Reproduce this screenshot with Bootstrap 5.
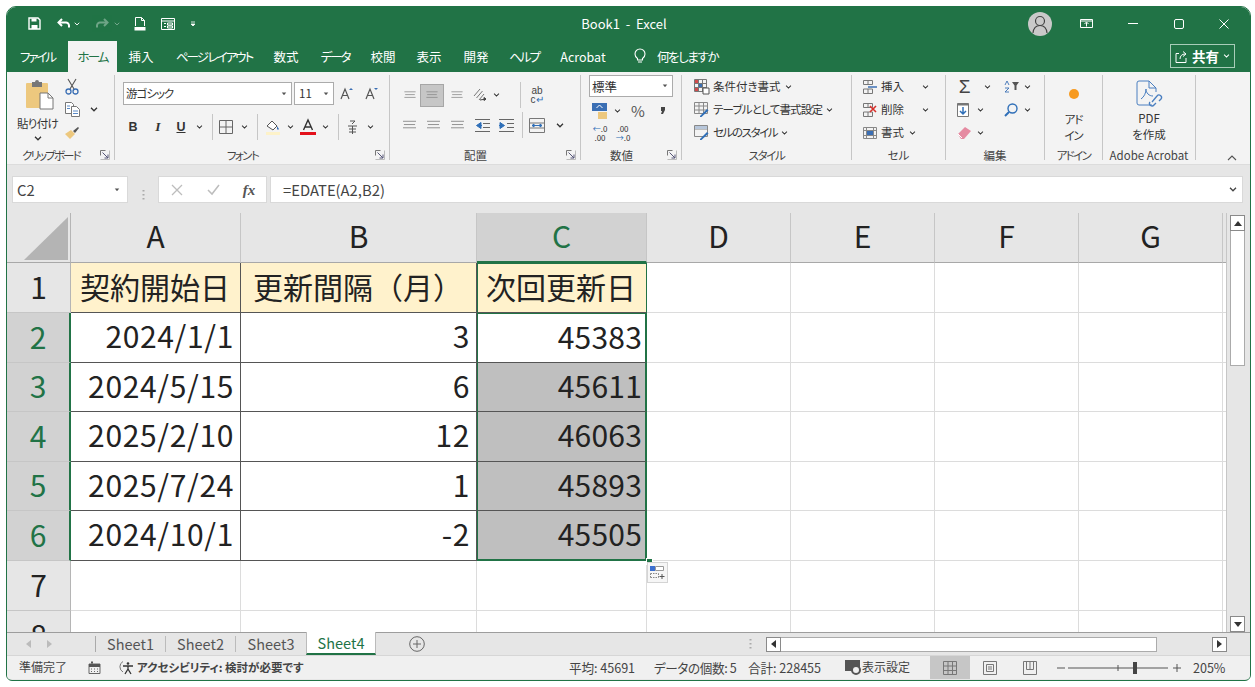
<!DOCTYPE html>
<html lang="ja"><head><meta charset="utf-8"><title>Book1 - Excel</title>
<link href="https://cdn.jsdelivr.net/npm/bootstrap@5.3.0/dist/css/bootstrap.min.css" rel="stylesheet">
<style>
html,body{margin:0;height:687px;overflow:hidden;background:#fff}
body{font-family:"Noto Sans CJK JP","Noto Sans",sans-serif;font-feature-settings:"palt";color:#333;font-size:12px;line-height:1.2}
svg{display:block;flex:none;overflow:visible}
.xwin{margin:6px 4px 0 6px;height:675px;border:1px solid #217346;border-radius:10px 10px 6px 6px;overflow:hidden;background:#e6e6e6;display:flex;flex-direction:column}
.xtitle{height:33px;background:#217346;color:#fff;display:grid;align-items:center;font-size:13px;flex:none;grid-template-columns:21px 13px 16px 13px 4px 8px 13px 13px 6px 8px 12px 12px 15px 14px 15px 8px 1fr 24px 28px 13px 35px 10px 36px 9px 36px 9px 22px}
.xname{text-align:center;padding-left:22px;font-size:13px}
.xtabs{height:32px;background:#217346;color:#fff;flex:none;display:flex;align-items:flex-end;font-size:12.5px}
.xtab{height:32px;display:flex;align-items:center;justify-content:center;flex:none}
.xtab.on{background:#f3f3f3;color:#217346;height:31px}
.xk{letter-spacing:-2px}
.t1{width:61px}.t2{width:49px}.t3{width:48px}.t4{width:98px}.t5{width:46px}.t6{width:52px}.t7{width:44px}.t8{width:48px}.t9{width:46px}.t10{width:50px}.t11{width:68px}.t12{width:30px;margin-left:8px}.t13{width:65px}
.xshare{margin-left:auto;margin-right:15px;margin-bottom:4px;width:65px;height:24px;border:1px solid #a9cdb9;display:flex;align-items:center;justify-content:center;gap:4px;font-weight:700;font-size:13.5px}
.xrib{height:93px;background:#f3f3f3;display:flex;flex:none;padding-top:3px;border-bottom:1px solid #dcdcdc}
.xg{height:85px;border-right:1px solid #c6c6c6;display:flex;flex-direction:column;flex:none}
.xg1{width:108px}.xg2{width:275px}.xg3{width:191px}.xg4{width:101px}.xg5{width:170px}.xg6{width:94px}.xg7{width:99px}.xg8{width:58px}.xg9{width:93px}
.xb{height:72px;flex:none}
.xl{height:13px;line-height:16px;display:grid;grid-template-columns:1fr 14px;text-align:center;font-size:11.5px;color:#444;align-items:center}
.xl>span{padding-right:5px;white-space:nowrap}
.xl.nol{grid-template-columns:1fr}
.xl.nol>span{padding-right:0}
.k1{letter-spacing:-1.9px}.k2{letter-spacing:-1.6px}.k3{letter-spacing:-.8px}.k4{letter-spacing:-1.4px}.k5{letter-spacing:-.7px}.k6{letter-spacing:-1px}
.xr{display:grid;align-items:center;justify-items:center;height:23px}
.xt{font-size:11.5px;color:#333;white-space:nowrap}
.xsel{background:#fff;border:1px solid #ababab;height:23px;width:100%;display:flex;align-items:center;justify-content:space-between;padding:0 4px 0 2px;font-size:11.5px;color:#333}
.xsel.pl{padding-left:4px}
.xsel.big{font-size:12.5px}
.xv{width:1px;height:26px;background:#c6c6c6}
.xon{width:24px;height:23px;background:#c6c6c6;border:1px solid #a6a6a6;display:flex;align-items:center;justify-content:center}
.pt7{padding-top:7px}
.rf1{grid-template-columns:169px 2px 40px 25px 24px;margin-left:8px;justify-content:start}
.rf2{grid-template-columns:20px 30px 16px 20px 6px 22px 14px 12px 20px 14px 21px 15px 10px 18px 18px;margin:9px 0 0 8px;justify-content:start}
.ra1{grid-template-columns:21px 24px 25px 22px 10px 19px 1px 32px;margin-left:9px;justify-content:start}
.ra2{grid-template-columns:21px 26px 23px 26px 22px 5px 1px 28px 18px;margin:7px 0 0 9px;justify-content:start}
.rn0{margin:0 0 0 8px;width:84px;height:22px}
.rn1{grid-template-columns:20px 16px 26px 24px;margin:2px 0 0 8px;justify-content:start}
.rn2{grid-template-columns:22px 24px;margin:-1px 0 0 8px;justify-content:start;height:24px}
.rs{display:flex;align-items:center;gap:4px;height:23px;padding-left:12px}
.rc1{grid-template-columns:18px 30px 28px;margin-left:11px;justify-content:start;justify-items:start}
.rc2{grid-template-columns:18px 28px 10px;margin-left:11px;justify-content:start;justify-items:start}
.rc1>svg:last-child{justify-self:center}
.re1{grid-template-columns:17px 28px 21px 10px;margin-left:10px;justify-content:start}
.re2{grid-template-columns:14px 20px 10px 22px 10px;margin-left:10px;justify-content:start}
.re3{grid-template-columns:17px 14px;margin-left:10px;justify-content:start}
.xcl1{display:flex}
.xcl1a{width:53px;padding:5px 0 0 8px;display:flex;flex-direction:column;align-items:center}
.xpaste{margin-left:5px}
.xpt{margin-top:7px}.xpc{margin-top:5px}
.xcl1b{display:grid;grid-template-columns:4px 16px 10px 8px;grid-template-rows:23px 23px 23px;align-items:center;justify-items:center}
.xbig{display:flex;flex-direction:column;align-items:center;line-height:16px;font-size:11.5px;color:#333;padding-top:5px}
.xdot{margin:8px 0 11px}
.xpdf{margin-bottom:3px}
.xcol{flex:1;display:flex;align-items:flex-end;justify-content:flex-end;padding:0 13px 3px 0}
.xfB{font-family:"Liberation Sans",sans-serif;font-size:12.5px;font-weight:700}
.xfI{font-family:"Liberation Serif",serif;font-size:13.5px;font-weight:700;font-style:italic}
.xfU{text-decoration:underline}
.xab{font-size:10px;line-height:9px;color:#444;font-family:"Liberation Sans",sans-serif;text-align:center}
.xbl{color:#2f6fb8}
.xdec{font-size:8px;line-height:9px;text-align:center}
.xpct{font-size:15px;color:#555}
.xsig{font-size:19px;line-height:1;color:#444;font-family:"Liberation Sans",sans-serif}
.xfb{height:48px;background:#e6e6e6;flex:none;display:flex;align-items:flex-start;padding:11px 7px 0 5px;font-size:14.8px}
.xbox{height:27px;background:#fff;border:1px solid #d9d9d9;display:flex;align-items:center;flex:none}
.xnm{width:116px;padding:0 7px 0 4px;justify-content:space-between;color:#444}
.xdots{width:30px;display:flex;justify-content:center;align-self:center}
.xbtns{width:109px;display:grid;grid-template-columns:36px 36px 36px;justify-items:center}
.xfx{font-family:"Liberation Serif",serif;font-size:15px;font-weight:700;font-style:italic;color:#555}
.xfm{flex:1;margin-left:3px;padding:0 5px 0 12px;justify-content:space-between;color:#444}
.xarea{height:419px;display:flex;flex:none;background:#e6e6e6;overflow:hidden;position:relative}
.xsheet{width:1219px;height:419px;overflow:hidden;display:grid;grid-template-columns:64px 170px 236px 170px 144px 144px 144px 144px 3px;grid-template-rows:50px 50px 50px 49px 50px 49px 50px 50px 50px;font-size:30px;color:#222;background:#fff;flex:none;font-feature-settings:normal}
.xsheet>div{display:flex;align-items:center;line-height:1;overflow:hidden;white-space:nowrap}
.xch{justify-content:center;background:#e6e6e6;border-right:1px solid #c6c6c6;border-bottom:1px solid #a8a8a8;padding-bottom:5px}
.xch.sl{background:#d2d2d2;color:#217346;border-bottom:2px solid #217346}
.xco{background:#e6e6e6;border-right:1px solid #b5b5b5;border-bottom:1px solid #a8a8a8;padding:4px 2px 2px 17px;align-items:stretch!important}
.xrh{justify-content:center;background:#e6e6e6;border-right:1px solid #b5b5b5;border-bottom:1px solid #c6c6c6;padding-bottom:4px}
.xrh.sl{background:#d2d2d2;color:#217346;border-right:2px solid #217346}
.xce{border-right:1px solid #dcdcdc;border-bottom:1px solid #dcdcdc;background:#fff}
.xfl{background:#fff;border-bottom:1px solid #dcdcdc}
.xfh{background:#e6e6e6;border-bottom:1px solid #a8a8a8}
.xhd{background:#fff2cc;border-right:1px solid #555;border-bottom:1px solid #555;padding-left:9px;padding-bottom:4px}
.xhd.hb{padding-left:12px}
.xda{background:#fff;border-right:1px solid #555;border-bottom:1px solid #555;justify-content:flex-end;padding-right:6px;padding-bottom:5px;letter-spacing:.65px}
.xc1{border-left:1px solid #217346;border-top:1px solid #217346;border-right:1px solid #217346;padding-left:8px}
.xsheet>.xcs{border-left:1px solid #217346;border-right:2px solid #217346;padding-right:3px;letter-spacing:.2px}
.xcs.gr{background:#bfbfbf}
.xcs.la{border-bottom:2px solid #217346}
.xcs.fi{border-top:1px solid #217346}
.xsb{flex:1;padding:2px 5px 0 3px;display:flex;flex-direction:column;border-left:1px solid #c6c6c6}
.xsbb{height:16px;background:#fff;border:1px solid #8a8a8a;display:flex;align-items:center;justify-content:center;flex:none}
.xsbt{height:135px;background:#fff;border:1px solid #ababab;border-top:0;flex:none}
.xsbs{flex:1}
.xhandle{position:absolute;left:639px;top:345px;width:5px;height:5px;background:#217346;border:1px solid #fff;box-sizing:content-box}
.xqa{position:absolute;left:640px;top:349px;width:21px;height:21px;background:#f6f6f6;border:1px solid #d4d4d4;display:flex;align-items:center;justify-content:center}
.xbar{height:23px;flex:none;display:flex;align-items:stretch;border-top:1px solid #9d9d9d;background:#e6e6e6;font-size:14.5px;color:#555}
.xnav{width:89px;display:flex;align-items:center;padding-left:19px;gap:16px;border-right:1px solid #aaa;margin:3px 0}
.xst{width:70px;display:flex;align-items:center;justify-content:center;flex:none}
.xst.br{border-right:1px solid #bbb;margin:3px 0}
.xst.on{background:#fff;color:#217346;border-left:1px solid #bbb;border-right:1px solid #bbb;border-bottom:2px solid #217346;margin-top:-1px}
.xplus{width:82px;display:flex;align-items:center;justify-content:center}
.xhs{margin-left:auto;display:flex;align-items:center;padding-right:23px}
.xhsb{width:15px;height:15px;background:#fff;border:1px solid #8a8a8a;display:flex;align-items:center;justify-content:center;flex:none}
.xhst{width:376px;height:15px;background:#fff;border:1px solid #ababab;border-left:0}
.xhse{width:55px}
.xhd2{width:16px;display:flex;justify-content:center;margin-right:8px}
.xstat{height:24px;flex:none;background:#f0f0f0;border-top:1px solid #d6d6d6;display:flex;align-items:center;font-size:12px;color:#444}
.xs0{width:12px}.xs1{width:69px}.xs2{width:31px}.xs3{font-weight:700;font-size:11.5px;padding-left:3px;margin-right:auto}
.xnum{font-size:12.6px;letter-spacing:-.05px}
.xsa{width:85px}.xsb2{width:94px;letter-spacing:-.4px}.xsc{width:97px}.xsd{width:85px;display:flex;align-items:center;gap:1px}
.xvw{width:40px;height:23px;display:flex;align-items:center;justify-content:center;flex:none}
.xvw.on{background:#c6c6c6}
.xzm{width:135px;display:flex;align-items:center;justify-content:center;gap:4px}
.xzp{width:65px;padding-left:8px}
.xicoin{width:100%;height:100%}
</style></head><body>
<svg width="0" height="0" class="d-none"><symbol id="ch" viewBox="0 0 8 5"><path d="M1 .8l3 3 3-3" fill="none" stroke="currentColor" stroke-width="1.3"/></symbol>
<symbol id="dn" viewBox="0 0 8 5"><path d="M1 .5h6L4 4z" fill="#555"/></symbol>
<symbol id="la" viewBox="0 0 10 10"><path d="M.5.5h5M.5.5v5" stroke="#777" fill="none"/><path d="M2.5 2.5L8 8M8 4.5V8H4.5" stroke="#557" fill="none"/><path d="M.5 9.5h9v-9" stroke="#bbb" fill="none"/></symbol>
<symbol id="al" viewBox="0 0 14 10"><path d="M0 1h14M1 4.5h12M0 8h14" stroke="#8a8a8a"/></symbol></svg>
<div class="xwin">
<div class="xtitle">
<i></i>
<svg width="13" height="13" viewBox="0 0 13 13"><path d="M1 1h9l2 2v9H1z" fill="none" stroke="#fff" stroke-width="1.4"/><path d="M3.5 1.5h5v3h-5zM3.5 8h6v4h-6z" fill="#fff"/></svg>
<i></i>
<svg width="14" height="11" viewBox="0 0 14 11"><path d="M5 1L1.5 4.5 5 8" fill="none" stroke="#fff" stroke-width="2"/><path d="M2 4.500h6.500a3 3 0 0 1 3.500 3v2" fill="none" stroke="#fff" stroke-width="2"/></svg>
<i></i>
<svg width="6" height="4" class="text-white"><use href="#ch"/></svg>
<i></i>
<svg width="14" height="11" viewBox="0 0 14 11" opacity=".35"><path d="M9 1l3.500 3.500L9 8" fill="none" stroke="#fff" stroke-width="2"/><path d="M12 4.500H5.500a3 3 0 0 0-3.500 3v2" fill="none" stroke="#fff" stroke-width="2"/></svg>
<i></i>
<svg width="6" height="4" class="text-white" opacity=".4"><use href="#ch"/></svg>
<i></i>
<svg width="12" height="14" viewBox="0 0 12 14"><path d="M1.500 9V.5h6l3 3V9M7.500.5v3h3" fill="none" stroke="#fff"/><path d="M.5 10h11v3.500H.5z" fill="#fff"/></svg>
<i></i>
<svg width="14" height="12" viewBox="0 0 14 12"><path d="M.5.500h13v11H.5zM.5 3h13M3 5.500h2M3 8.500h2M6.500 5h5v2h-5zM6.500 8h5v2h-5z" fill="none" stroke="#fff"/></svg>
<i></i>
<svg width="6" height="6" viewBox="0 0 6 6"><path d="M1 1h4M1 3l2 2 2-2z" stroke="#fff" fill="#fff" stroke-width=".8"/></svg>
<div class="xname">Book1&nbsp; - &nbsp;Excel</div>
<svg width="24" height="24" viewBox="0 0 24 24"><circle cx="12" cy="12" r="12" fill="#c9c9c9"/><circle cx="12" cy="9" r="4.500" fill="none" stroke="#444" stroke-width="1.200"/><path d="M5 21c.5-5 3.500-7.500 7-7.500s6.500 2.500 7 7.500" fill="none" stroke="#444" stroke-width="1.200"/></svg>
<i></i>
<svg width="13" height="9" viewBox="0 0 13 9"><path d="M.5.500h12v8H.5zM.5 2h12" fill="none" stroke="#fff"/><path d="M6.500 7.500V3.500M4.500 5l2-2 2 2" fill="none" stroke="#fff"/></svg>
<i></i>
<svg width="10" height="1"><path d="M0 .5h10" stroke="#fff"/></svg>
<i></i>
<svg width="10" height="10"><rect x=".5" y=".5" width="9" height="9" rx="1.500" fill="none" stroke="#fff"/></svg>
<i></i>
<svg width="10" height="10"><path d="M.5.5l9 9M9.500.5l-9 9" stroke="#fff"/></svg>
<i></i>
</div>
<div class="xtabs">
<div class="xtab t1 xk">ファイル</div>
<div class="xtab on t2 xk">ホーム</div>
<div class="xtab t3">挿入</div>
<div class="xtab t4 xk">ページ レイアウト</div>
<div class="xtab t5">数式</div>
<div class="xtab t6 xk">データ</div>
<div class="xtab t7">校閲</div>
<div class="xtab t8">表示</div>
<div class="xtab t9">開発</div>
<div class="xtab t10 xk">ヘルプ</div>
<div class="xtab t11">Acrobat</div>
<div class="xtab t12"><svg width="12" height="16" viewBox="0 0 12 16"><path d="M3.500 10.500C2 9.500 1 8 1 6a5 5 0 0 1 10 0c0 2-1 3.500-2.500 4.500V12h-5zM4 14h4" fill="none" stroke="#fff" stroke-width="1.100"/></svg></div>
<div class="xtab t13 k4">何をしますか</div>
<div class="xshare"><svg width="13" height="13" viewBox="0 0 13 13"><path d="M4 3.500H1v9h10V8M5 9c0-3 2-5 5-5M8 1.500L11 4 8 6.500" fill="none" stroke="#fff"/></svg>共有<svg width="7" height="4" class="text-white"><use href="#ch"/></svg></div>
</div>
<div class="xrib">
<div class="xg xg1"><div class="xb xcl1">
<div class="xcl1a">
<svg width="28" height="30" viewBox="0 0 28 30" class="xpaste"><rect x="0" y="3" width="22" height="25" rx="1" fill="#edc87e"/><path d="M6 2h3a2 2 0 0 1 4 0h3v5H6z" fill="#777"/><path d="M14 13h8l5 5v11H14z" fill="#fff" stroke="#777"/><path d="M22 13v5h5" fill="none" stroke="#777"/></svg>
<div class="xt xpt k5">貼り付け</div>
<svg width="8" height="5" class="xpc"><use href="#ch"/></svg>
</div>
<div class="xcl1b">
<i></i><svg width="14" height="16" viewBox="0 0 14 16"><path d="M3 0l6 10M11 0L5 10" stroke="#555" stroke-width="1.100"/><circle cx="3.500" cy="12.500" r="2.500" fill="none" stroke="#3b6fb4" stroke-width="1.300"/><circle cx="10.500" cy="12.500" r="2.500" fill="none" stroke="#3b6fb4" stroke-width="1.300"/></svg><i></i><i></i>
<i></i><svg width="15" height="15" viewBox="0 0 15 15"><path d="M.5.500h6l2 2v9h-8z" fill="#fff" stroke="#777"/><path d="M6.500 4.500h5l3 3v7h-8z" fill="#fff" stroke="#777"/><path d="M2 4h3M2 6.500h3M8 9h5M8 11.500h5" stroke="#5a8ac6"/></svg><i></i><svg width="8" height="5"><use href="#ch"/></svg>
<i></i><svg width="15" height="13" viewBox="0 0 15 13"><path d="M0 8l6-4 4 4-5 5z" fill="#edc87e"/><path d="M8 5l5-4 1 1-4 5z" fill="#555"/></svg><i></i><i></i>
</div></div>
<div class="xl"><span class="k1">クリップボード</span><svg width="10" height="10"><use href="#la"/></svg></div></div>

<div class="xg xg2"><div class="xb pt7">
<div class="xr rf1"><div class="xsel"><span class="k6">游ゴシック</span><svg width="6" height="4"><use href="#dn"/></svg></div><i></i><div class="xsel pl">11<svg width="6" height="4"><use href="#dn"/></svg></div>
<svg width="13" height="13" viewBox="0 0 13 13"><path d="M1 12L5 2l4 10M2.500 8.500h5" fill="none" stroke="#555" stroke-width="1.200"/><path d="M9 3l2-2 2 2z" fill="#3b6fb4"/></svg>
<svg width="13" height="13" viewBox="0 0 13 13"><path d="M1 12L5 2l4 10M2.500 8.500h5" fill="none" stroke="#555" stroke-width="1.200"/><path d="M9 1l2 2 2-2z" fill="#3b6fb4"/></svg></div>
<div class="xr rf2">
<span class="xfB">B</span><span class="xfI">I</span><span class="xfB xfU">U</span><svg width="7" height="4"><use href="#ch"/></svg>
<div class="xv"></div>
<svg width="14" height="14" viewBox="0 0 14 14"><path d="M.5.500h13v13H.5zM7 .5v13M.5 7h13" fill="none" stroke="#666"/></svg><svg width="7" height="4"><use href="#ch"/></svg>
<div class="xv"></div>
<svg width="14" height="16" viewBox="0 0 14 16"><path d="M1 7l5-5 5 5-4 4z" fill="#fff" stroke="#555"/><path d="M11 7l2 3a1.200 1.200 0 0 1-2 0z" fill="#3b6fb4"/><path d="M0 13h14v3H0z" fill="#fdf2c9"/></svg><svg width="7" height="4"><use href="#ch"/></svg>
<svg width="16" height="16" viewBox="0 0 16 16"><path d="M3.500 11L8 1l4.500 10M5 8h6" fill="none" stroke="#333" stroke-width="1.400"/><path d="M0 13h16v3H0z" fill="#e3111b"/></svg><svg width="7" height="4"><use href="#ch"/></svg>
<div class="xv"></div>
<svg width="9" height="15" viewBox="0 0 9 15"><path d="M2 1h5L4 4M0 6h9M1 9h7M1 12h7M4.500 6v8" fill="none" stroke="#555"/></svg><svg width="7" height="4"><use href="#ch"/></svg>
</div></div>
<div class="xl"><span class="k2">フォント</span><svg width="10" height="10"><use href="#la"/></svg></div></div>

<div class="xg xg3"><div class="xb pt7">
<div class="xr ra1"><svg width="14" height="8"><use href="#al"/></svg><div class="xon"><svg width="14" height="8"><use href="#al"/></svg></div><svg width="14" height="8"><use href="#al"/></svg>
<svg width="15" height="15" viewBox="0 0 15 15"><path d="M1 8l6-7M3.500 10l6-7M6 12l5-6" stroke="#777"/><path d="M7 12l6-1M13 11l-2-1.500v3z" stroke="#444" fill="#444"/></svg><svg width="7" height="4"><use href="#ch"/></svg><i></i><div class="xv"></div>
<div class="xab">ab<br>c<span class="xbl">↵</span></div></div>
<div class="xr ra2"><svg width="13" height="10"><use href="#al"/></svg><svg width="13" height="10"><use href="#al"/></svg><svg width="13" height="10"><use href="#al"/></svg>
<svg width="15" height="13" viewBox="0 0 15 13"><path d="M0 .5h15M8 4.500h7M8 8.500h7M0 12.500h15" stroke="#666"/><path d="M6 3.500L1.500 6.500 6 9.500zM3 6.500h4" fill="#2f6fb8" stroke="#2f6fb8"/></svg>
<svg width="15" height="13" viewBox="0 0 15 13"><path d="M0 .5h15M8 4.500h7M8 8.500h7M0 12.500h15" stroke="#666"/><path d="M1 3.500L5.500 6.500 1 9.500zM0 6.500h4" fill="#2f6fb8" stroke="#2f6fb8"/></svg>
<i></i><div class="xv"></div>
<svg width="16" height="15" viewBox="0 0 16 15"><path d="M.5.500h15v14H.5zM.5 5h15M.5 10h15" fill="none" stroke="#777"/><path d="M3 7.500h10M3 7.500l2-1.500v3zM13 7.500l-2-1.500v3z" stroke="#2f6fb8" fill="#2f6fb8"/></svg>
<svg width="8" height="5"><use href="#ch"/></svg></div></div>
<div class="xl"><span>配置</span><svg width="10" height="10"><use href="#la"/></svg></div></div>

<div class="xg xg4"><div class="xb">
<div class="xsel rn0 big">標準<svg width="6" height="4"><use href="#dn"/></svg></div>
<div class="xr rn1"><svg width="15" height="16" viewBox="0 0 15 16"><path d="M0 0h15v8H0z" fill="#3b6fb4"/><path d="M4.500 5l3-3 3 3" stroke="#fff" fill="none"/><path d="M6 9h9v7H6z" fill="#edc87e"/></svg><svg width="7" height="4"><use href="#ch"/></svg><span class="xpct">%</span><svg width="4" height="7" viewBox="0 0 4 7"><path d="M0 0h4v3L2 7H0l1-3H0z" fill="#444"/></svg></div>
<div class="xr rn2"><div class="xdec"><span class="xbl">←</span>.0<br>.00</div><div class="xdec">.00<br><span class="xbl">→</span>.0</div></div>
</div><div class="xl"><span>数値</span><svg width="10" height="10"><use href="#la"/></svg></div></div>

<div class="xg xg5"><div class="xb">
<div class="rs"><svg width="15" height="15" viewBox="0 0 15 15"><path d="M.5.500h12v12H.5zM.5 4.500h12M.5 8.500h12M4.500.5v12M8.500.5v12" fill="none" stroke="#777"/><path d="M1 1h3v3H1zM1 9h3v3H1z" fill="#d14b4b"/><path d="M5 5h3v3H5z" fill="#3b6fb4"/><path d="M9 9h6v6H9z" fill="#fff" stroke="#555"/></svg><span class="xt">条件付き書式</span><svg width="7" height="4"><use href="#ch"/></svg></div>
<div class="rs"><svg width="15" height="15" viewBox="0 0 15 15"><path d="M.5.500h13v11H.5zM.5 4h13M.5 8h13M5 .5v11M9.500.5v11" fill="none" stroke="#888"/><path d="M6 14l7-7 1.500 1.500-7 6.500H6z" fill="#2f6fb8"/></svg><span class="xt k3">テーブルとして書式設定</span><svg width="7" height="4"><use href="#ch"/></svg></div>
<div class="rs"><svg width="15" height="15" viewBox="0 0 15 15"><path d="M.5.500h13v11H.5zM.5 4h13" fill="#f3f3f3" stroke="#888"/><path d="M1 1h12v3H1z" fill="#b7c6da"/><path d="M6 14l7-7 1.500 1.500-7 6.500H6z" fill="#2f6fb8"/></svg><span class="xt k4">セルのスタイル</span><svg width="7" height="4"><use href="#ch"/></svg></div>
</div><div class="xl nol"><span class="k4">スタイル</span></div></div>

<div class="xg xg6"><div class="xb">
<div class="xr rc1"><svg width="14" height="14" viewBox="0 0 14 14"><path d="M.5.500h9v4h-9zM.5 9h9v4.500h-9zM5 .5v4M5 9v4.500" fill="none" stroke="#777"/><path d="M5 7h9" stroke="#3b6fb4" stroke-width="1.500"/></svg><span class="xt">挿入</span><svg width="7" height="4"><use href="#ch"/></svg></div>
<div class="xr rc1"><svg width="14" height="14" viewBox="0 0 14 14"><path d="M.5.500h9v4h-9zM.5 9h9v4.500h-9zM5 .5v4M5 9v4.500" fill="none" stroke="#777"/><path d="M7 3l6 6M13 3L7 9" stroke="#d8312b" stroke-width="1.600"/></svg><span class="xt">削除</span><svg width="7" height="4"><use href="#ch"/></svg></div>
<div class="xr rc2"><svg width="14" height="14" viewBox="0 0 14 14"><path d="M.5 1.500h13v11H.5zM.5 4.500h13M.5 9.500h13M3.500 1.500v11M10.500 1.500v11" fill="none" stroke="#888"/><path d="M4 5h6v4H4z" fill="#3b6fb4"/></svg><span class="xt">書式</span><svg width="7" height="4"><use href="#ch"/></svg></div>
</div><div class="xl nol"><span>セル</span></div></div>

<div class="xg xg7"><div class="xb">
<div class="xr re1"><span class="xsig">Σ</span><svg width="7" height="4"><use href="#ch"/></svg><svg width="15" height="13" viewBox="0 0 15 13"><path d="M8 2h7l-2.500 3.500V10h-2V5.500z" fill="#555"/><path d="M1 5l2-4 2 4M1 8h4L1 12h4" fill="none" stroke="#3b6fb4" stroke-width=".9"/></svg><svg width="7" height="4"><use href="#ch"/></svg></div>
<div class="xr re2"><svg width="12" height="14" viewBox="0 0 12 14"><path d="M.5.500h11v13H.5z" fill="#fff" stroke="#777"/><path d="M.5.500h11v2H.5z" fill="#777"/><path d="M6 4v7M3 8l3 3 3-3" fill="none" stroke="#2f6fb8" stroke-width="1.500"/></svg><svg width="7" height="4"><use href="#ch"/></svg><i></i><svg width="14" height="14" viewBox="0 0 14 14"><circle cx="8.500" cy="5.500" r="4.500" fill="none" stroke="#2f6fb8" stroke-width="1.400"/><path d="M5 9l-4 4" stroke="#2f6fb8" stroke-width="2"/></svg><svg width="7" height="4"><use href="#ch"/></svg></div>
<div class="xr re3"><svg width="14" height="12" viewBox="0 0 14 12"><path d="M0 7l7-7 6 4-7 8H3z" fill="#e58aa1"/><path d="M0 7l4 4" stroke="#fff"/></svg><svg width="7" height="4"><use href="#ch"/></svg></div>
</div><div class="xl nol"><span>編集</span></div></div>

<div class="xg xg8"><div class="xb xbig"><svg width="12" height="12" class="xdot"><circle cx="6" cy="6" r="5" fill="#f79a1f"/></svg><span class="k6">アド</span><span class="k6">イン</span></div><div class="xl nol"><span class="k2">アドイン</span></div></div>
<div class="xg xg9"><div class="xb xbig"><svg width="26" height="27" viewBox="0 0 26 27" class="xpdf"><path d="M16 25H3a2 2 0 0 1-2-2V3a2 2 0 0 1 2-2h10l7 7v4" fill="none" stroke="#4a7fc0"/><path d="M13 1v7h7" fill="none" stroke="#4a7fc0"/><path d="M5 19c3-2 5-6 5-10 0 4 3 7 7 7" fill="none" stroke="#4a7fc0"/><path d="M16 22l5-6a2.500 2.500 0 0 1 4 3l-2 2M14 22a2.500 2.500 0 0 0 4 3l2-2" fill="none" stroke="#4a7fc0" stroke-width="1.300"/></svg><span>PDF</span><span>を作成</span></div><div class="xl nol"><span>Adobe Acrobat</span></div></div>
<div class="xcol"><svg width="10" height="6" viewBox="0 0 10 6"><path d="M1 5l4-4 4 4" fill="none" stroke="#555" stroke-width="1.100"/></svg></div>
</div>

<div class="xfb">
<div class="xbox xnm">C2<svg width="6" height="4"><use href="#dn"/></svg></div>
<div class="xdots"><svg width="3" height="12" viewBox="0 0 3 12"><path d="M1.500 1v1.500M1.500 5v1.500M1.500 9v1.500" stroke="#aaa" stroke-width="2"/></svg></div>
<div class="xbox xbtns"><svg width="12" height="12"><path d="M1 1l10 10M11 1L1 11" stroke="#bdbdbd" stroke-width="1.300"/></svg><svg width="13" height="11"><path d="M1 6l4 4 7-9" fill="none" stroke="#bdbdbd" stroke-width="1.500"/></svg><span class="xfx">fx</span></div>
<div class="xbox xfm"><span>=EDATE(A2,B2)</span><svg width="8" height="5"><use href="#ch"/></svg></div>
</div>

<div class="xarea">
<div class="xsheet">
<div class="xco"><svg class="xicoin" viewBox="0 0 43 43" preserveAspectRatio="none"><path d="M43 0v43H0z" fill="#b4b4b4"/></svg></div><div class="xch">A</div><div class="xch">B</div><div class="xch sl">C</div><div class="xch">D</div><div class="xch">E</div><div class="xch">F</div><div class="xch">G</div><div class="xfh"></div>
<div class="xrh">1</div><div class="xhd">契約開始日</div><div class="xhd hb">更新間隔（月）</div><div class="xhd xc1">次回更新日</div><div class="xce"></div><div class="xce"></div><div class="xce"></div><div class="xce"></div><div class="xfl"></div>
<div class="xrh sl">2</div><div class="xda">2024/1/1</div><div class="xda">3</div><div class="xda xcs fi">45383</div><div class="xce"></div><div class="xce"></div><div class="xce"></div><div class="xce"></div><div class="xfl"></div>
<div class="xrh sl">3</div><div class="xda">2024/5/15</div><div class="xda">6</div><div class="xda xcs gr">45611</div><div class="xce"></div><div class="xce"></div><div class="xce"></div><div class="xce"></div><div class="xfl"></div>
<div class="xrh sl">4</div><div class="xda">2025/2/10</div><div class="xda">12</div><div class="xda xcs gr">46063</div><div class="xce"></div><div class="xce"></div><div class="xce"></div><div class="xce"></div><div class="xfl"></div>
<div class="xrh sl">5</div><div class="xda">2025/7/24</div><div class="xda">1</div><div class="xda xcs gr">45893</div><div class="xce"></div><div class="xce"></div><div class="xce"></div><div class="xce"></div><div class="xfl"></div>
<div class="xrh sl">6</div><div class="xda">2024/10/1</div><div class="xda">-2</div><div class="xda xcs gr la">45505</div><div class="xce"></div><div class="xce"></div><div class="xce"></div><div class="xce"></div><div class="xfl"></div>
<div class="xrh">7</div><div class="xce"></div><div class="xce"></div><div class="xce"></div><div class="xce"></div><div class="xce"></div><div class="xce"></div><div class="xce"></div><div class="xfl"></div>
<div class="xrh">8</div><div class="xce"></div><div class="xce"></div><div class="xce"></div><div class="xce"></div><div class="xce"></div><div class="xce"></div><div class="xce"></div><div class="xfl"></div>
</div>
<div class="xsb"><div class="xsbb"><svg width="8" height="5" viewBox="0 0 8 5"><path d="M0 5h8L4 0z" fill="#333"/></svg></div><div class="xsbt"></div><div class="xsbs"></div><div class="xsbb"><svg width="8" height="5" viewBox="0 0 8 5"><path d="M0 0h8L4 5z" fill="#333"/></svg></div></div>
<div class="xhandle"></div>
<div class="xqa"><svg width="15" height="14" viewBox="0 0 15 14"><path d="M0 0h5v5H0z" fill="#3b6fd0"/><path d="M5.500.5h8v4h-8z" fill="#fff" stroke="#999"/><path d="M.5 7.500h8M.5 11.500h8M.5 7.500v4M8.500 7.500v4" fill="none" stroke="#888" stroke-dasharray="1.500 1"/><path d="M12 8v5M9.500 10.500h5" stroke="#555"/></svg></div>
</div>

<div class="xbar">
<div class="xnav"><svg width="5" height="8" viewBox="0 0 5 8"><path d="M5 0v8L0 4z" fill="#bbb"/></svg><svg width="5" height="8" viewBox="0 0 5 8"><path d="M0 0v8l5-4z" fill="#bbb"/></svg></div>
<div class="xst br">Sheet1</div><div class="xst br">Sheet2</div><div class="xst">Sheet3</div><div class="xst on">Sheet4</div>
<div class="xplus"><svg width="16" height="16" viewBox="0 0 16 16"><circle cx="8" cy="8" r="7.300" fill="none" stroke="#666"/><path d="M8 4v8M4 8h8" stroke="#666"/></svg></div>
<div class="xhs"><div class="xhd2"><svg width="3" height="12" viewBox="0 0 3 12"><path d="M1.500 1v1.500M1.500 5v1.500M1.500 9v1.500" stroke="#aaa" stroke-width="2"/></svg></div><div class="xhsb"><svg width="5" height="8" viewBox="0 0 5 8"><path d="M5 0v8L0 4z" fill="#333"/></svg></div><div class="xhst"></div><div class="xhse"></div><div class="xhsb"><svg width="5" height="8" viewBox="0 0 5 8"><path d="M0 0v8l5-4z" fill="#333"/></svg></div></div>
</div>

<div class="xstat">
<div class="xs0"></div><div class="xs1">準備完了</div>
<div class="xs2"><svg width="13" height="13" viewBox="0 0 13 13"><path d="M1 3h11v9.500H1z" fill="none" stroke="#666"/><path d="M1 3h11v3H1zM3 .5h2v2H3z" fill="#555"/><path d="M3 8h1M6 8h1M9 8h1M3 10.500h1M6 10.500h1M9 10.500h1" stroke="#666"/></svg></div>
<svg width="15" height="15" viewBox="0 0 15 15"><path d="M4 1.500A6 6 0 0 0 4 12" fill="none" stroke="#777"/><circle cx="9" cy="3.500" r="1.300" fill="#333"/><path d="M4 6h10M9 6v3M9 9l-3 5M9 9l3 5" stroke="#333" stroke-width="1.300"/></svg>
<div class="xs3">アクセシビリティ: 検討が必要です</div>
<div class="xsa xnum">平均: 45691</div><div class="xsb2 xnum">データの個数: 5</div><div class="xsc xnum">合計: 228455</div>
<div class="xsd"><svg width="16" height="14" viewBox="0 0 16 14"><path d="M0 0h15v11H0z" fill="#555"/><circle cx="11" cy="10" r="4" fill="#f0f0f0" stroke="#555" stroke-width="2"/></svg>表示設定</div>
<div class="xvw on"><svg width="14" height="14" viewBox="0 0 14 14"><path d="M.5.500h13v13H.5zM5 .5v13M9.500.5v13M.5 5h13M.5 9.500h13" fill="none" stroke="#777"/></svg></div>
<div class="xvw"><svg width="14" height="14" viewBox="0 0 14 14"><path d="M.5.500h13v13H.5zM3.500 3.500h7v7h-7zM5 6h4M5 8h4" fill="none" stroke="#777"/></svg></div>
<div class="xvw"><svg width="14" height="14" viewBox="0 0 14 14"><path d="M.5.500h13v13H.5zM3.500.5v8h7v-8M7 .5v8" fill="none" stroke="#777"/></svg></div>
<div class="xzm"><svg width="135" height="14" viewBox="0 0 135 14"><path d="M7 7h8M18 7h100M123 7h8M127 3v8M68 4v6" stroke="#555" fill="none"/><path d="M83 1h4v12h-4z" fill="#444"/></svg></div>
<div class="xzp xnum">205%</div>
</div>
</div>
</body></html>
